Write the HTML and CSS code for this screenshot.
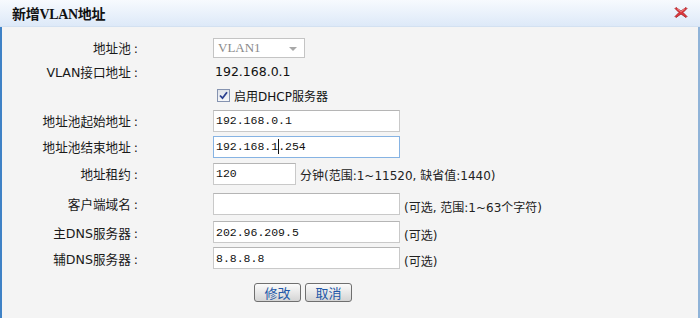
FILE: index.html
```html
<!DOCTYPE html>
<html lang="zh">
<head>
<meta charset="utf-8">
<title>新增VLAN地址</title>
<link rel="stylesheet" href="styles.css">
</head>
<body>
<div class="dialog">
  <div class="titlebar">
    <span class="title">新增VLAN地址</span>
    <span class="close">
      <svg width="14" height="13" viewBox="0 0 14 13">
        <path d="M2 1.5 L7 5 L12 1.5 L13 2.5 L9 6.5 L13 10.5 L12 11.5 L7 8 L2 11.5 L1 10.5 L5 6.5 L1 2.5 Z" fill="#e0393e" stroke="#a3181c" stroke-width="0.8" stroke-linejoin="round"/>
        <path d="M3 2.6 L7 5.6 L11 2.6" fill="none" stroke="#f39a9c" stroke-width="0.8"/>
      </svg>
    </span>
  </div>
  <div class="body">
    <div class="row r1">
      <div class="lbl">地址池<span class="c">:</span></div>
      <div class="field">
        <div class="select"><span class="sel-text">VLAN1</span><span class="arrow"></span></div>
      </div>
    </div>
    <div class="row r2">
      <div class="lbl">VLAN接口地址<span class="c">:</span></div>
      <div class="field"><span class="value">192.168.0.1</span></div>
    </div>
    <div class="row r3">
      <div class="lbl"></div>
      <div class="field check-field">
        <span class="checkbox">
          <svg width="9" height="9" viewBox="0 0 9 9"><path d="M1 4.5 L3.5 7.2 L8 1.2" fill="none" stroke="#2a3f8f" stroke-width="1.8"/></svg>
        </span>
        <span class="check-label">启用DHCP服务器</span>
      </div>
    </div>
    <div class="row r4">
      <div class="lbl">地址池起始地址<span class="c">:</span></div>
      <div class="field"><span class="input wide">192.168.0.1</span></div>
    </div>
    <div class="row r5">
      <div class="lbl">地址池结束地址<span class="c">:</span></div>
      <div class="field"><span class="input wide focus">192.168.1<span class="caret"></span>.254</span></div>
    </div>
    <div class="row r6">
      <div class="lbl">地址租约<span class="c">:</span></div>
      <div class="field"><span class="input short">120</span><span class="hint lease">分钟(范围:1~11520, 缺省值:1440)</span></div>
    </div>
    <div class="row r7">
      <div class="lbl">客户端域名<span class="c">:</span></div>
      <div class="field"><span class="input wide"></span><span class="hint">(可选, 范围:1~63个字符)</span></div>
    </div>
    <div class="row r8">
      <div class="lbl">主DNS服务器<span class="c">:</span></div>
      <div class="field"><span class="input wide">202.96.209.5</span><span class="hint">(可选)</span></div>
    </div>
    <div class="row r9">
      <div class="lbl">辅DNS服务器<span class="c">:</span></div>
      <div class="field"><span class="input wide">8.8.8.8</span><span class="hint">(可选)</span></div>
    </div>
    <div class="buttons">
      <span class="btn">修改</span>
      <span class="btn">取消</span>
    </div>
  </div>
</div>
</body>
</html>
```

FILE: styles.css
```css
* { box-sizing: border-box; }
html, body { margin: 0; padding: 0; }
body {
  width: 700px;
  height: 318px;
  overflow: hidden;
  background: #f4f4f4;
  font-family: "DejaVu Sans", "Noto Sans CJK SC", sans-serif;
  font-size: 12px;
  color: #222;
}
.dialog {
  width: 700px;
  height: 318px;
  display: flex;
  flex-direction: column;
}
.titlebar {
  height: 27px;
  flex: none;
  display: flex;
  align-items: center;
  justify-content: space-between;
  padding: 0 12px 0 12px;
  background: linear-gradient(#f7fafe, #dde9f8);
  border-bottom: 1px solid #d3e1f1;
}
.title {
  font-family: "Liberation Serif", "Noto Sans CJK SC", serif;
  font-weight: bold;
  font-size: 14px;
  color: #111;
  letter-spacing: -0.3px;
}
.close { display: flex; margin-top: -1px; }
.body {
  flex: 1;
  border-left: 2px solid #3f82c6;
  border-right: 2px solid #8fb3d8;
  padding-top: 9px;
  display: flex;
  flex-direction: column;
}
.row {
  display: flex;
  align-items: center;
}
.r1 { height: 23px; }
.r2 { height: 24px; }
.r3 { height: 25px; }
.r4 { height: 25px; }
.r5 { height: 27px; }
.r6 { height: 27px; }
.r7 { height: 33px; }
.r8 { height: 24px; }
.r9 { height: 28px; }
.lbl {
  width: 136px;
  flex: none;
  text-align: right;
  color: #1a1a1a;
  font-size: 12.6px;
  font-family: "DejaVu Sans", "Noto Sans CJK SC", sans-serif;
}
.lbl .c { margin-left: 3px; }
.field {
  margin-left: 75px;
  display: flex;
  align-items: center;
}
.select {
  width: 92px;
  height: 20px;
  background: #fff;
  border: 1px solid #c4c4c4;
  display: flex;
  align-items: center;
  justify-content: space-between;
  padding: 0 7px 0 4px;
}
.sel-text {
  font-family: "Liberation Serif", serif;
  font-size: 13px;
  color: #8a8a8a;
}
.arrow {
  width: 0;
  height: 0;
  border-left: 4px solid transparent;
  border-right: 4px solid transparent;
  border-top: 4px solid #a8a8a8;
  margin-top: 2px;
}
.value {
  margin-left: 2px;
  color: #111;
  font-size: 12.5px;
}
.check-field { margin-left: 79px; }
.checkbox {
  width: 13px;
  height: 13px;
  border: 1px solid #8593b0;
  background: linear-gradient(#dfe3ea, #f6f7f9);
  display: flex;
  align-items: center;
  justify-content: center;
}
.check-label { margin-left: 4px; color: #111; }
.input {
  height: 22px;
  background: #fff;
  border: 1px solid #c9c9c9;
  border-top-color: #b5b5b5;
  display: flex;
  align-items: center;
  padding: 0 2px;
  font-family: "Liberation Mono", monospace;
  font-size: 11.5px;
  color: #111;
  white-space: pre;
}
.wide { width: 187px; }
.short { width: 83px; }
.focus { border-color: #86b3e3; }
.caret {
  display: inline-block;
  width: 1px;
  height: 15px;
  background: #111;
  margin: 0 -1px 0 0;
}
.hint {
  margin-left: 4px;
  color: #222;
  margin-top: 5px;
}
.hint.lease { margin-top: 2px; }
.buttons {
  display: flex;
  gap: 4px;
  margin-left: 252px;
  margin-top: 11px;
}
.btn {
  width: 47px;
  height: 19px;
  border: 1px solid #6f6f6f;
  border-radius: 3px;
  background: linear-gradient(#fbfbfb, #e6e6e6 55%, #d4d4d4);
  color: #2257a8;
  font-family: "Noto Sans CJK SC", sans-serif;
  font-size: 13px;
  display: flex;
  align-items: center;
  justify-content: center;
  line-height: 1;
}
```
